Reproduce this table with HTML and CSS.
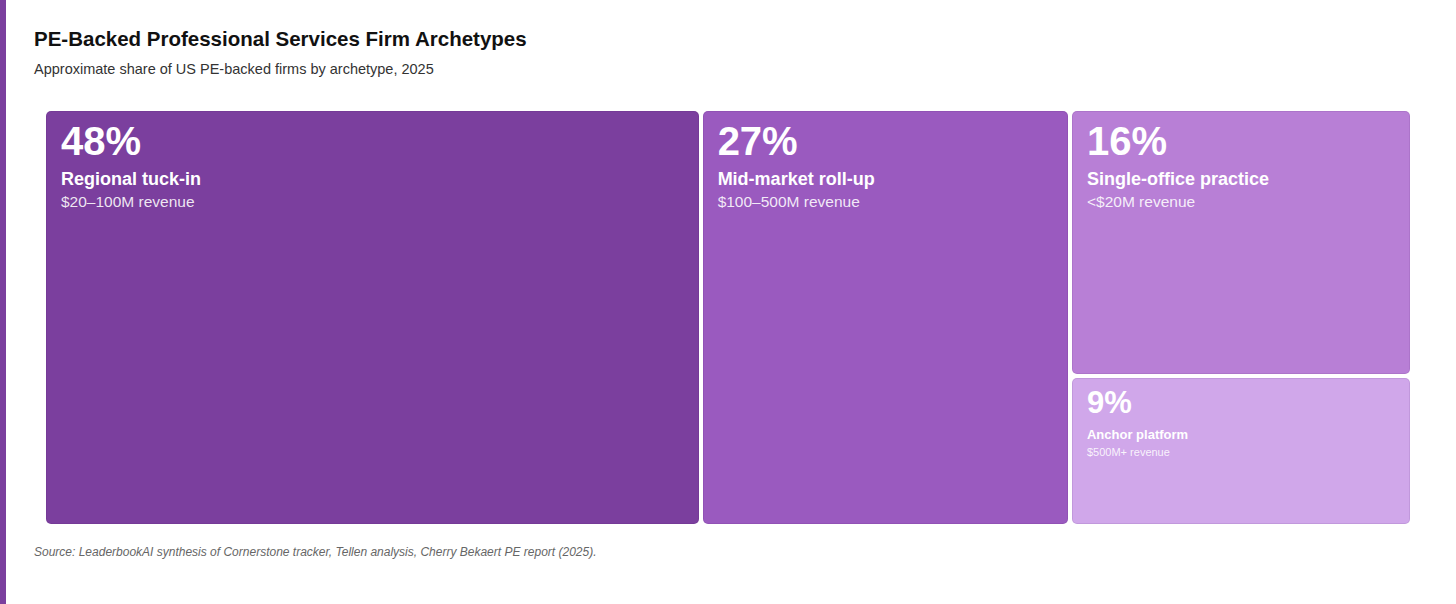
FILE: index.html
```html
<!DOCTYPE html>
<html lang="en">
<head>
<meta charset="utf-8">
<title>PE-Backed Professional Services Firm Archetypes</title>
<link rel="stylesheet" href="styles.css">
</head>
<body>
<div class="page">
  <h1 class="title">PE-Backed Professional Services Firm Archetypes</h1>
  <p class="subtitle">Approximate share of US PE-backed firms by archetype, 2025</p>
  <div class="treemap">
    <div class="tile tile-1 col-48">
      <div class="pct">48%</div>
      <div class="name">Regional tuck-in</div>
      <div class="desc">$20–100M revenue</div>
    </div>
    <div class="tile tile-2 col-27">
      <div class="pct">27%</div>
      <div class="name">Mid-market roll-up</div>
      <div class="desc">$100–500M revenue</div>
    </div>
    <div class="stack col-25">
      <div class="tile tile-3 row-16">
        <div class="pct">16%</div>
        <div class="name">Single-office practice</div>
        <div class="desc">&lt;$20M revenue</div>
      </div>
      <div class="tile tile-4 tile-small row-9">
        <div class="pct">9%</div>
        <div class="name">Anchor platform</div>
        <div class="desc">$500M+ revenue</div>
      </div>
    </div>
  </div>
  <p class="source">Source: LeaderbookAI synthesis of Cornerstone tracker, Tellen analysis, Cherry Bekaert PE report (2025).</p>
</div>
</body>
</html>
```

FILE: styles.css
```css
html, body {
  margin: 0;
  padding: 0;
  background: #ffffff;
}

body {
  font-family: "Liberation Sans", Arial, Helvetica, sans-serif;
  color: #111111;
}

.page {
  box-sizing: border-box;
  min-height: 604px;
  border-left: 6px solid #7b3f9e;
  padding: 27px 34px 0 28px;
}

.title {
  margin: 0;
  font-size: 20.5px;
  line-height: 1.2;
  font-weight: 700;
  color: #111111;
}

.subtitle {
  margin: 8px 0 0;
  font-size: 14.5px;
  line-height: 1.3;
  color: #333333;
}

.treemap {
  display: flex;
  height: 417px;
  margin: 31px 10px 0;
}

.stack {
  display: flex;
  flex-direction: column;
  height: 100%;
}

/* share of the treemap width / height, minus the 2px margin on each side */
.col-48 { flex: 0 0 calc(48% - 4px); }
.col-27 { flex: 0 0 calc(27% - 4px); }
.col-25 { flex: 0 0 25%; }
.row-16 { flex: 0 0 calc(64% - 4px); }
.row-9  { flex: 0 0 calc(36% - 4px); }

.tile {
  box-sizing: border-box;
  margin: 2px;
  min-width: 0;
  min-height: 0;
  border: 1px solid rgba(70, 20, 100, 0.1);
  border-radius: 5px;
  padding: 9px 14px;
  color: #ffffff;
  overflow: hidden;
}

.tile-1 { background: #7b3f9e; }
.tile-2 { background: #9a5abf; }
.tile-3 { background: #b87fd6; }
.tile-4 { background: #d0a7ea; }

.pct {
  font-size: 40px;
  line-height: 1;
  font-weight: 700;
}

.name {
  margin-top: 8px;
  font-size: 18px;
  line-height: 1.2;
  font-weight: 700;
}

.desc {
  margin-top: 1px;
  font-size: 15.5px;
  line-height: 1.3;
  color: rgba(255, 255, 255, 0.88);
}

.tile-small {
  padding-top: 8px;
}

.tile-small .pct {
  font-size: 31px;
}

.tile-small .name {
  margin-top: 9px;
  font-size: 13px;
}

.tile-small .desc {
  margin-top: 2px;
  font-size: 11px;
}

.source {
  margin: 19px 0 0;
  font-size: 12px;
  line-height: 1.3;
  font-style: italic;
  color: #666666;
}
```
